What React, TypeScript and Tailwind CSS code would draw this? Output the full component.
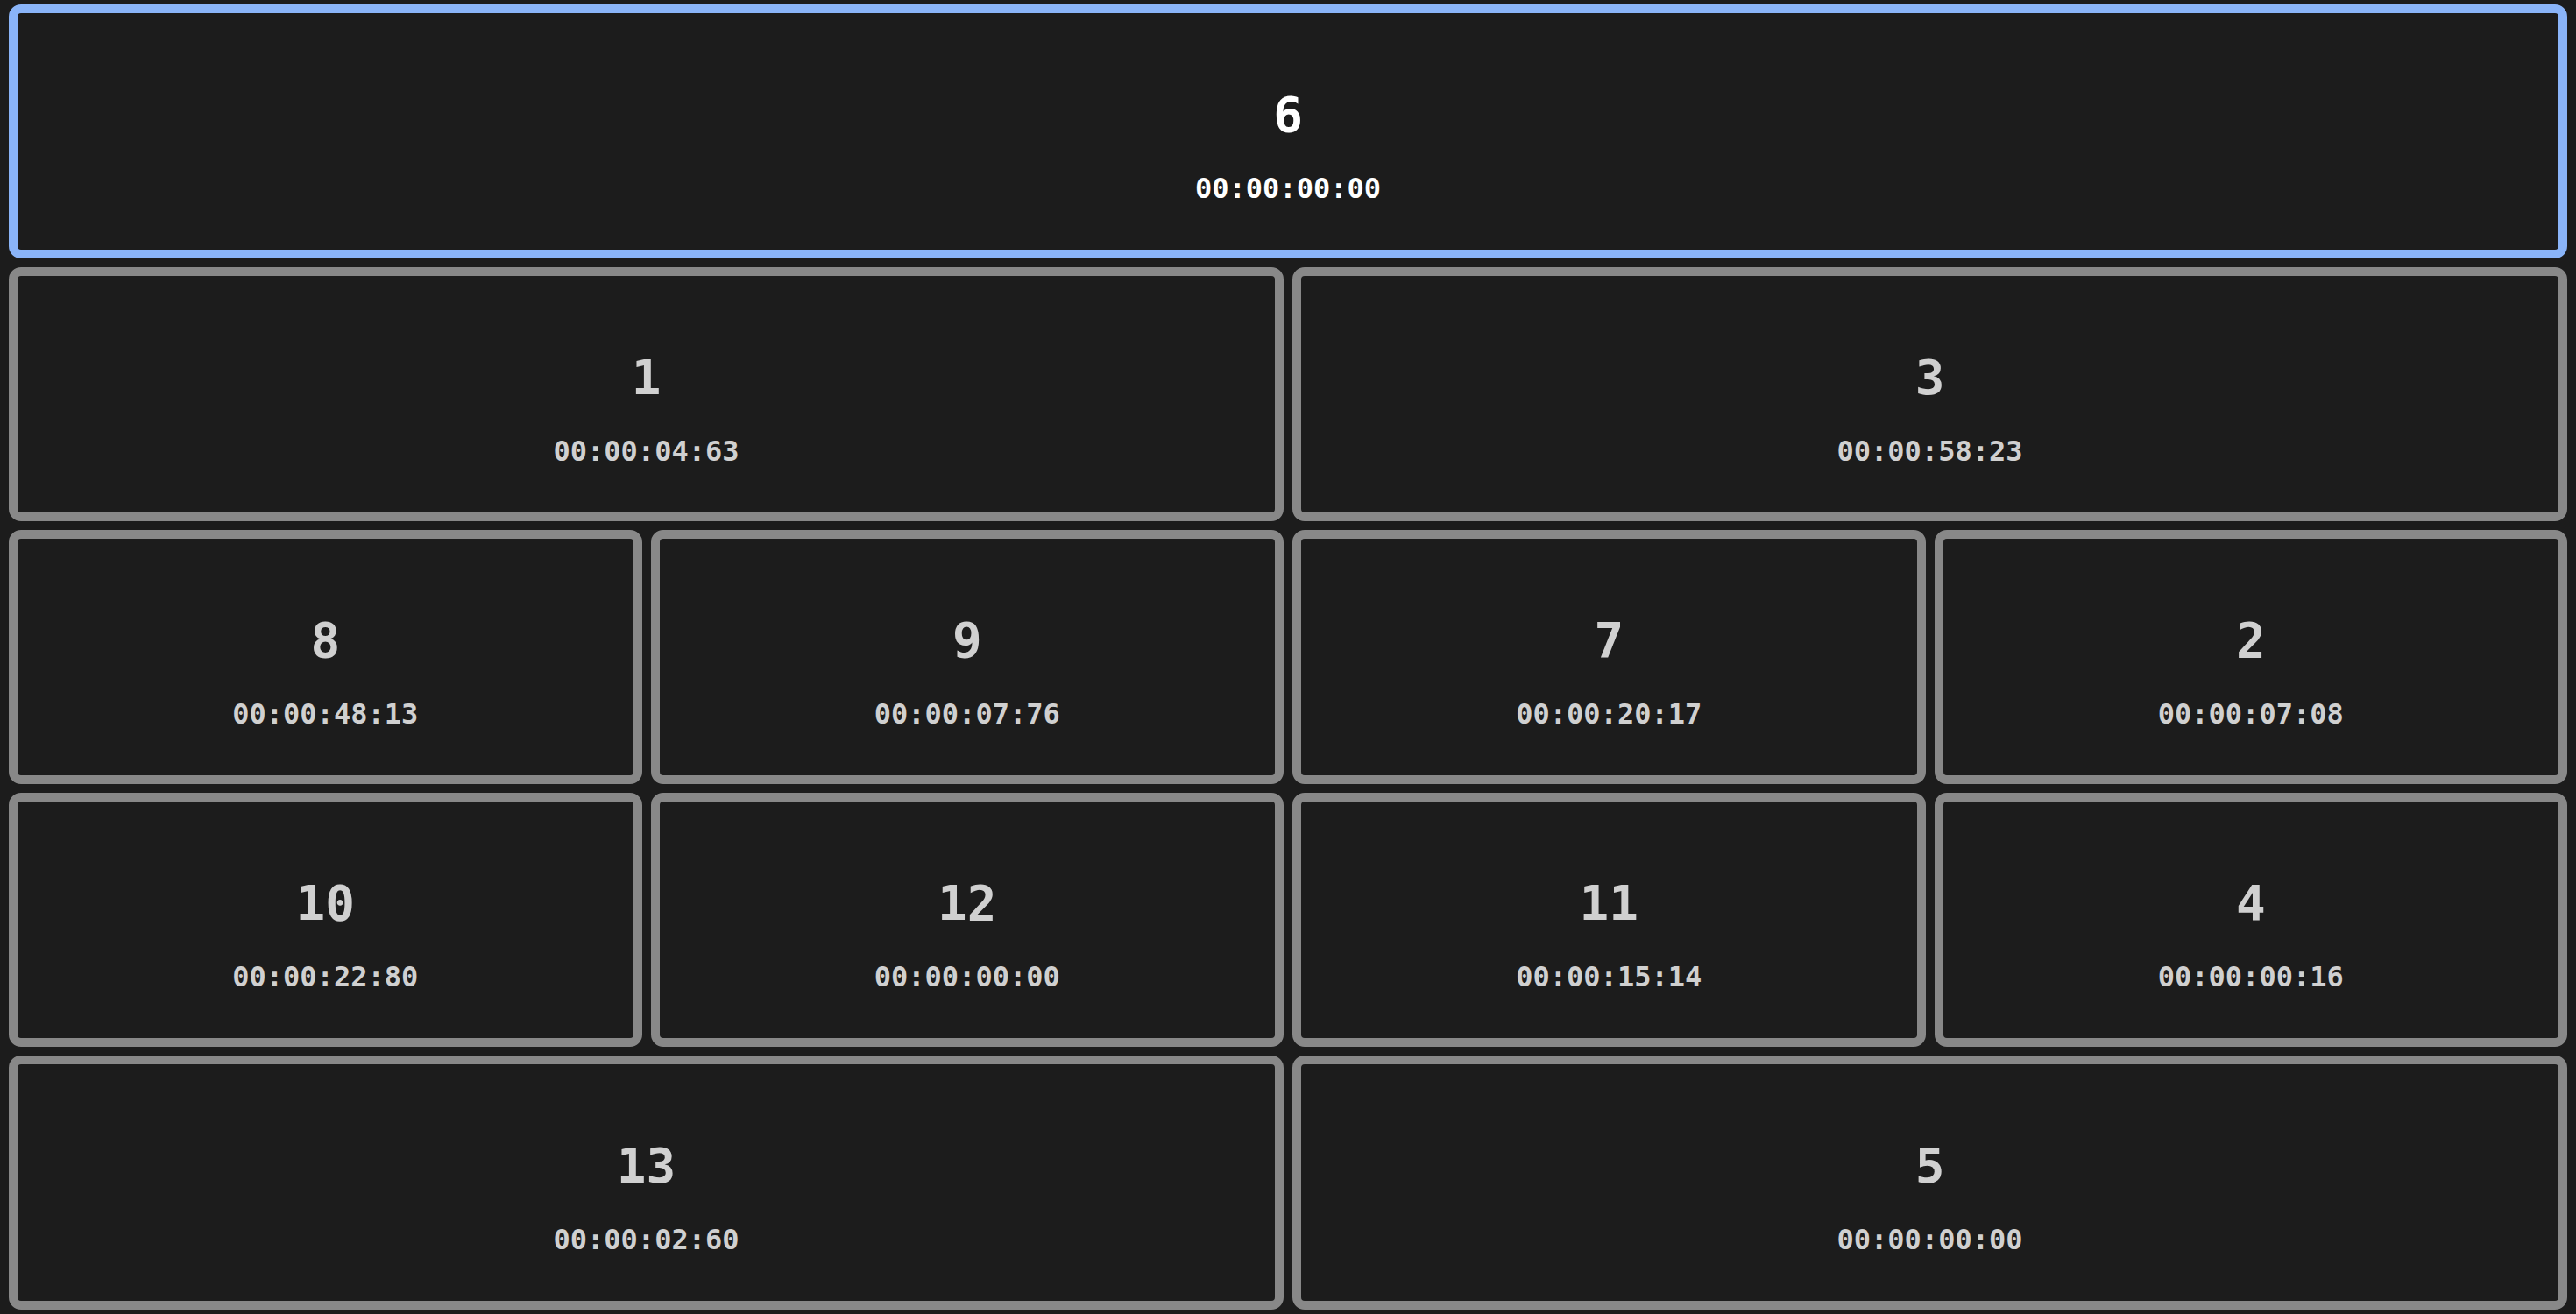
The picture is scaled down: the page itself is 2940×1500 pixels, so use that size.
import React from 'react';

type Cell = { id: number; time: string; span: 1 | 2 | 4; active?: boolean };

const cells: Cell[] = [
  { id: 6, time: '00:00:00:00', span: 4, active: true },
  { id: 1, time: '00:00:04:63', span: 2 },
  { id: 3, time: '00:00:58:23', span: 2 },
  { id: 8, time: '00:00:48:13', span: 1 },
  { id: 9, time: '00:00:07:76', span: 1 },
  { id: 7, time: '00:00:20:17', span: 1 },
  { id: 2, time: '00:00:07:08', span: 1 },
  { id: 10, time: '00:00:22:80', span: 1 },
  { id: 12, time: '00:00:00:00', span: 1 },
  { id: 11, time: '00:00:15:14', span: 1 },
  { id: 4, time: '00:00:00:16', span: 1 },
  { id: 13, time: '00:00:02:60', span: 2 },
  { id: 5, time: '00:00:00:00', span: 2 },
];

const spanClass = { 1: 'col-span-1', 2: 'col-span-2', 4: 'col-span-4' };

function Tile({ cell }: { cell: Cell }) {
  return (
    <div
      className={`${spanClass[cell.span]} flex flex-col items-center justify-center pt-[31px] rounded-[14px] border-[10px] bg-[#1c1c1c] ${
        cell.active ? 'border-[#8ab4f8] text-white' : 'border-[#888888] text-[#d0d0d0]'
      }`}
    >
      <div className="text-[56px] font-bold leading-[65px]">{cell.id}</div>
      <div className="mt-[34px] text-[32px] font-semibold leading-[37px]">{cell.time}</div>
    </div>
  );
}

export default function App() {
  return (
    <div
      className="h-[1500px] w-full bg-[#1c1c1c] px-[10px] py-[5px]"
      style={{ fontFamily: '"DejaVu Sans Mono", monospace' }}
    >
      <div className="grid h-full grid-cols-4 grid-rows-5 gap-[10px]">
        {cells.map((c) => (
          <Tile key={c.id} cell={c} />
        ))}
      </div>
    </div>
  );
}
